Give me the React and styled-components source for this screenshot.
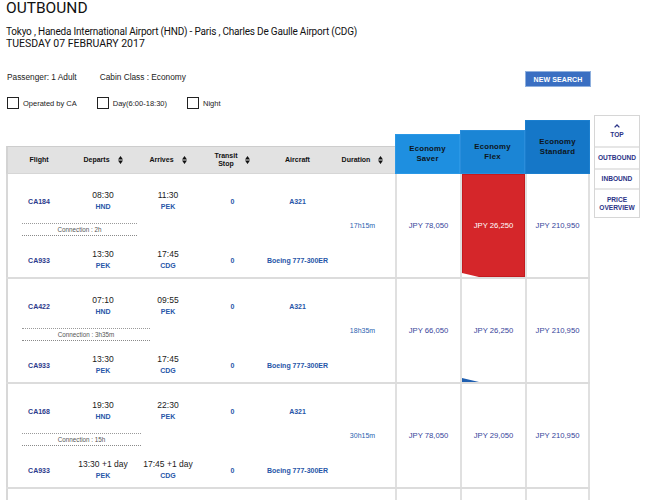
import React from "react";
import styled, { createGlobalStyle } from "styled-components";

const Global = createGlobalStyle`
  html, body { margin: 0; padding: 0; background: #fff; }
  * { box-sizing: border-box; }
`;

const COLS = "64px 66px 64px 65px 65px 65px 65px 65px 65px";
const SEG_COLS = "62px 66px 64px 65px 65px";

const Page = styled.div`
  width: 657px;
  height: 500px;
  overflow: hidden;
  padding-left: 6px;
  font-family: "Liberation Sans", Arial, sans-serif;
  color: #111;
`;

const Title = styled.h1`
  margin: 0;
  font-family: Roboto, "Liberation Sans", sans-serif;
  font-weight: 400;
  font-size: 15.5px;
  line-height: 16px;
  color: #111;
`;

const Route = styled.div`
  margin-top: 10px;
  font-family: Roboto, "Liberation Sans", sans-serif;
  font-size: 10.5px;
  line-height: 12px;
  color: #111;
`;

const RouteLine = styled.div`
  font-size: ${(p) => (p.$tight ? "10px" : "10.5px")};
  letter-spacing: ${(p) => (p.$tight ? "-0.2px" : "0")};
`;

const InfoRow = styled.div`
  display: flex;
  align-items: flex-start;
  width: 585px;
  margin-top: 21px;
  padding-left: 1px;
  gap: 23px;
`;

const InfoText = styled.span`
  padding-top: 1px;
  font-size: 8.3px;
  line-height: 10px;
  color: #222;
`;

const NewSearch = styled.button`
  margin-left: auto;
  width: 66px;
  height: 16px;
  padding: 0;
  border: 1px solid #8fb0de;
  background: #3a6fc2;
  color: #fff;
  font-family: "Liberation Sans", Arial, sans-serif;
  font-weight: 700;
  font-size: 7px;
  letter-spacing: 0.1px;
`;

const FilterRow = styled.div`
  display: flex;
  align-items: center;
  gap: 20px;
  margin-top: 10px;
  padding-left: 1px;
`;

const Filter = styled.label`
  display: flex;
  align-items: center;
  gap: 4px;
  font-size: 7.5px;
  color: #222;
`;

const Box = styled.span`
  width: 12px;
  height: 12px;
  border: 1.5px solid #222;
  background: #fff;
`;

const Results = styled.div`
  display: flex;
  align-items: flex-start;
  margin-top: 6px;
`;

const Table = styled.div`
  width: 584px;
  margin-top: 5px;
`;

const HeadRow = styled.div`
  display: grid;
  grid-template-columns: ${COLS};
  align-items: end;
  height: 54px;
`;

const HeadCell = styled.div`
  height: 28px;
  display: flex;
  align-items: center;
  justify-content: center;
  gap: 8px;
  background: #e2e2e2;
  border-top: 1px solid #cdcdcd;
  border-bottom: 1px solid #d6d6d6;
  border-left: ${(p) => (p.$first ? "2px solid #d3d3d3" : "none")};
  font-weight: 700;
  font-size: 7px;
  line-height: 8px;
  text-align: center;
  color: #111;
`;

const FareTab = styled.div`
  height: ${(p) => p.$h}px;
  display: flex;
  align-items: center;
  justify-content: center;
  text-align: center;
  background: ${(p) => p.$bg};
  border: 1px solid ${(p) => p.$edge};
  font-weight: 700;
  font-size: 7.8px;
  line-height: 10px;
  letter-spacing: 0.2px;
  color: #0d1520;
`;

const BodyRow = styled.div`
  display: grid;
  grid-template-columns: ${COLS};
  height: 105px;
  border-bottom: 2px solid #dcdcdc;
`;

const Segments = styled.div`
  grid-column: 1 / 6;
  border-left: 2px solid #d8d8d8;
  padding-top: 16px;
`;

const SegRow = styled.div`
  display: grid;
  grid-template-columns: ${SEG_COLS};
  height: 22px;
  align-items: center;
  text-align: center;
`;

const Code = styled.div`
  font-weight: 700;
  font-size: 7px;
  line-height: 11px;
  color: ${(p) => (p.$navy ? "#2d3a8c" : "#2756a8")};
`;

const Time = styled.div`
  font-size: 8.5px;
  line-height: 11px;
  color: #1a1a1a;
`;

const Connection = styled.div`
  margin: 11px 0 13px 14px;
  height: 13px;
  border-top: 1px dotted #9a9a9a;
  border-bottom: 1px dotted #8a8a8a;
  font-size: 6.3px;
  line-height: 11px;
  text-align: center;
  color: #555;
`;

const Duration = styled.div`
  display: flex;
  align-items: center;
  justify-content: center;
  font-size: 7px;
  color: #2a62b0;
`;

const FareCell = styled.div`
  position: relative;
  display: flex;
  align-items: center;
  justify-content: center;
  border-left: 2px solid #e0e0e0;
  border-right: ${(p) => (p.$last ? "2px solid #e0e0e0" : "none")};
  background: ${(p) => (p.$selected ? "#d5262a" : "#fff")};
  box-shadow: ${(p) => (p.$selected ? "inset 0 0 0 1px #c41a1e" : "none")};
  font-size: 7.7px;
  color: ${(p) => (p.$selected ? "#fff" : "#36449a")};
`;

const Wedge = styled.span`
  position: absolute;
  left: 0;
  bottom: 0;
  width: 17px;
  height: 4px;
  background: ${(p) => p.$color};
  clip-path: polygon(0 0, 100% 100%, 0 100%);
`;

const Nav = styled.nav`
  width: 46px;
  margin-left: 4px;
  border: 1px solid #d6d6d6;
  background: #fff;
`;

const NavItem = styled.div`
  height: ${(p) => p.$h}px;
  display: flex;
  flex-direction: column;
  align-items: center;
  justify-content: center;
  gap: 3px;
  border-top: ${(p) => (p.$first ? "none" : "2px solid #e6e6e6")};
  font-weight: 700;
  font-size: 6.6px;
  line-height: 8px;
  text-align: center;
  color: #2b3487;
`;

const SortIcon = () => (
  <svg width="5" height="8" viewBox="0 0 5 8">
    <path d="M0 3.4 L2.5 0 L5 3.4 Z M0 4.6 L5 4.6 L2.5 8 Z" fill="#111" />
  </svg>
);

const Chevron = () => (
  <svg width="6" height="4" viewBox="0 0 6 4">
    <path d="M0.6 3.4 L3 1 L5.4 3.4" fill="none" stroke="#2b3487" strokeWidth="1.3" />
  </svg>
);

const rows = [
  {
    segs: [
      { flight: "CA184", dep: "08:30", depCode: "HND", arr: "11:30", arrCode: "PEK", stop: "0", aircraft: "A321" },
      { flight: "CA933", dep: "13:30", depCode: "PEK", arr: "17:45", arrCode: "CDG", stop: "0", aircraft: "Boeing 777-300ER" },
    ],
    conn: "2h",
    connWidth: 115,
    duration: "17h15m",
    prices: ["JPY 78,050", "JPY 26,250", "JPY 210,950"],
    selected: 1,
    wedge: "#ffffff",
  },
  {
    segs: [
      { flight: "CA422", dep: "07:10", depCode: "HND", arr: "09:55", arrCode: "PEK", stop: "0", aircraft: "A321" },
      { flight: "CA933", dep: "13:30", depCode: "PEK", arr: "17:45", arrCode: "CDG", stop: "0", aircraft: "Boeing 777-300ER" },
    ],
    conn: "3h35m",
    connWidth: 128,
    duration: "18h35m",
    prices: ["JPY 66,050", "JPY 26,250", "JPY 210,950"],
    selected: -1,
    wedge: "#1f5fb0",
  },
  {
    segs: [
      { flight: "CA168", dep: "19:30", depCode: "HND", arr: "22:30", arrCode: "PEK", stop: "0", aircraft: "A321" },
      { flight: "CA933", dep: "13:30 +1 day", depCode: "PEK", arr: "17:45 +1 day", arrCode: "CDG", stop: "0", aircraft: "Boeing 777-300ER" },
    ],
    conn: "15h",
    connWidth: 119,
    duration: "30h15m",
    prices: ["JPY 78,050", "JPY 29,050", "JPY 210,950"],
    selected: -1,
    wedge: null,
  },
];

const Segment = ({ s }) => (
  <SegRow>
    <Code $navy>{s.flight}</Code>
    <div>
      <Time>{s.dep}</Time>
      <Code>{s.depCode}</Code>
    </div>
    <div>
      <Time>{s.arr}</Time>
      <Code>{s.arrCode}</Code>
    </div>
    <Code>{s.stop}</Code>
    <Code>{s.aircraft}</Code>
  </SegRow>
);

export default function App() {
  return (
    <>
      <Global />
      <Page>
        <Title>OUTBOUND</Title>
        <Route>
          <RouteLine $tight>Tokyo , Haneda International Airport (HND) - Paris , Charles De Gaulle Airport (CDG)</RouteLine>
          <RouteLine>TUESDAY 07 FEBRUARY 2017</RouteLine>
        </Route>
        <InfoRow>
          <InfoText>Passenger: 1 Adult</InfoText>
          <InfoText>Cabin Class : Economy</InfoText>
          <NewSearch>NEW SEARCH</NewSearch>
        </InfoRow>
        <FilterRow>
          <Filter><Box />Operated by CA</Filter>
          <Filter><Box />Day(6:00-18:30)</Filter>
          <Filter><Box />Night</Filter>
        </FilterRow>
        <Results>
          <Table>
            <HeadRow>
              <HeadCell $first>Flight</HeadCell>
              <HeadCell>Departs <SortIcon /></HeadCell>
              <HeadCell>Arrives <SortIcon /></HeadCell>
              <HeadCell>Transit<br />Stop <SortIcon /></HeadCell>
              <HeadCell>Aircraft</HeadCell>
              <HeadCell>Duration <SortIcon /></HeadCell>
              <FareTab $h={40} $bg="#1e8fe0" $edge="#2a98e6">Economy<br />Saver</FareTab>
              <FareTab $h={44} $bg="#1b85d5" $edge="#2a8ddb">Economy<br />Flex</FareTab>
              <FareTab $h={54} $bg="#1577c8" $edge="#1c7fcf">Economy<br />Standard</FareTab>
            </HeadRow>
            {rows.map((r, i) => (
              <BodyRow key={i}>
                <Segments>
                  <Segment s={r.segs[0]} />
                  <Connection style={{ width: r.connWidth }}>Connection : {r.conn}</Connection>
                  <Segment s={r.segs[1]} />
                </Segments>
                <Duration>{r.duration}</Duration>
                {r.prices.map((p, j) => (
                  <FareCell key={j} $selected={r.selected === j} $last={j === 2}>
                    {p}
                    {j === 1 && r.wedge && <Wedge $color={r.wedge} />}
                  </FareCell>
                ))}
              </BodyRow>
            ))}
            <BodyRow>
              <Segments />
              <Duration />
              <FareCell />
              <FareCell />
              <FareCell $last />
            </BodyRow>
          </Table>
          <Nav>
            <NavItem $first $h={30}><Chevron />TOP</NavItem>
            <NavItem $h={22}>OUTBOUND</NavItem>
            <NavItem $h={20}>INBOUND</NavItem>
            <NavItem $h={29}>PRICE<br />OVERVIEW</NavItem>
          </Nav>
        </Results>
      </Page>
    </>
  );
}
